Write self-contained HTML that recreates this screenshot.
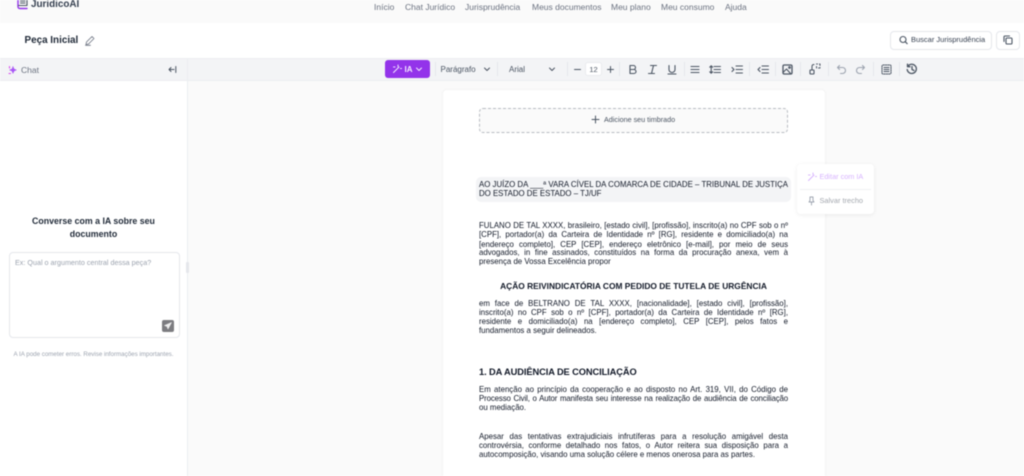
<!DOCTYPE html>
<html lang="pt-BR"><head><meta charset="utf-8"><title>JuridicoAI</title>
<style>
html,body{margin:0;padding:0;background:#fff}
#w{position:relative;width:1024px;height:476px;overflow:hidden;background:#fff;font-family:"Liberation Sans",sans-serif;filter:blur(.4px)}
#w div,#w span.a,#w svg{position:absolute}
.t{white-space:nowrap;line-height:12px}
.n{top:.5px;font-size:8.5px;color:#6b7280;line-height:12px;white-space:nowrap}
.l{left:479px;width:309px;font-size:7.85px;line-height:10px;height:10px;color:#111827;text-align:justify;text-align-last:justify;white-space:normal}
.e{text-align-last:left}
svg{fill:none;stroke:#4b5563;stroke-width:1.1;stroke-linecap:round;stroke-linejoin:round}
.s{top:62px;width:1px;height:14px;background:#e5e7eb}
.tb{font-size:8px;color:#4b5563;line-height:12px;top:63.5px;white-space:nowrap}
</style></head><body><div id="w">
<div style="left:0;top:0;width:1024px;height:23px;background:#fafafa"></div>
<svg style="left:16px;top:-3px" width="13" height="13" viewBox="0 0 13 13"><path d="M2 1v8.5c0 1.200 .8 2 2 2h7" stroke="#9333ea" stroke-width="1.400"/><path d="M2.500 1.500h8.500v7h-8.500M4.500 4h4.500M4.500 6h4.500"/></svg>
<div class="t" style="left:31px;top:-1px;font-size:9.900px;font-weight:700;color:#374151">JuridicoAI</div>
<div class="n" style="left:374px">Início</div>
<div class="n" style="left:405px">Chat Jurídico</div>
<div class="n" style="left:465px">Jurisprudência</div>
<div class="n" style="left:532px">Meus documentos</div>
<div class="n" style="left:611px">Meu plano</div>
<div class="n" style="left:661px">Meu consumo</div>
<div class="n" style="left:725px">Ajuda</div>

<div class="t" style="left:24.500px;top:35px;font-size:9.900px;font-weight:700;color:#1f2937">Peça Inicial</div>
<svg style="left:85px;top:35px" width="10" height="11" viewBox="0 0 10 11"><path d="M1 9.500l.5-2.500 5.500-5.500 2 2-5.500 5.500zM0.500 10.300h5" stroke="#6b7280" stroke-width=".8"/></svg>

<div style="left:890px;top:31px;width:100px;height:17px;border:1px solid #e5e7eb;border-radius:4px;background:#fff"></div>
<svg style="left:899px;top:35px" width="9" height="10" viewBox="0 0 9 10"><circle cx="4" cy="4.500" r="3"/><path d="M6.200 6.700l2 2"/></svg>
<div class="t" style="left:911px;top:34px;font-size:7.500px;color:#374151;font-weight:400">Buscar Jurisprudência</div>
<div style="left:996px;top:31px;width:22px;height:17px;border:1px solid #e5e7eb;border-radius:4px;background:#fff"></div>
<svg style="left:1003px;top:35px" width="10" height="10" viewBox="0 0 10 10"><rect x="3" y="3" width="6" height="6" rx="1"/><path d="M1 6.500v-4.500c0-.5.5-1 1-1h4.500"/></svg>

<div style="left:0;top:58px;width:1024px;height:23px;background:#f3f4f6;border-top:1px solid #eceef1;border-bottom:1px solid #eceef1;box-sizing:border-box"></div>
<div style="left:187px;top:58px;width:1px;height:418px;background:#eceef1"></div>
<div style="left:188px;top:81px;width:836px;height:395px;background:#fafafa"></div>

<svg style="left:8px;top:65px" width="10" height="10" viewBox="0 0 10 10"><path d="M5 1.500l1 2.500 2.500 1-2.500 1-1 2.500-1-2.500-2.500-1 2.500-1z" fill="#a855f7" stroke="#a855f7" stroke-width=".5"/><path d="M1.500 1.500v1.500M1 8.500h1.500" stroke="#d946ef"/></svg>
<div class="t" style="left:21px;top:63.500px;font-size:8.500px;color:#6b7280">Chat</div>
<svg style="left:168px;top:65px" width="9" height="9" viewBox="0 0 9 9"><path d="M7.800 1.500v6M6 4.500h-5M3 2.500l-2 2 2 2" stroke-width="1"/></svg>

<div style="left:385px;top:60px;width:45px;height:18px;border-radius:3px;background:#9333ea"></div>
<svg style="left:392px;top:64px" width="10" height="10" viewBox="0 0 10 10"><path d="M1.500 8.500l5.500-5.500M6 1v1.500M8.500 4.500h1M1.500 3h1.500" stroke="#f3e8ff" stroke-width="1"/></svg>
<div class="t" style="left:404.500px;top:63.500px;font-size:8px;font-weight:700;color:#f3e8ff">IA</div>
<svg style="left:415px;top:65px" width="8" height="8" viewBox="0 0 8 8"><path d="M1.500 3l2.500 2.500 2.500-2.500" stroke="#f3e8ff" stroke-width="1"/></svg>

<div class="s" style="left:435px"></div>
<div class="tb" style="left:440.500px">Parágrafo</div>
<svg style="left:483px;top:65px" width="8" height="8" viewBox="0 0 8 8"><path d="M1.500 3l2.500 2.500 2.500-2.500" stroke-width="1"/></svg>
<div class="s" style="left:497px"></div>
<div class="tb" style="left:509px">Arial</div>
<svg style="left:548px;top:65px" width="8" height="8" viewBox="0 0 8 8"><path d="M1.500 3l2.500 2.500 2.500-2.500" stroke-width="1"/></svg>
<div class="s" style="left:567px"></div>
<svg style="left:573px;top:65px" width="9" height="9" viewBox="0 0 9 9"><path d="M1.500 4.500h6" stroke-width="1"/></svg>
<div style="left:585px;top:62px;width:17px;height:14px;background:#fff;border:1px solid #e9ebee;border-radius:3px;box-sizing:border-box"></div>
<div class="tb" style="left:585px;width:17px;text-align:center;font-size:7.500px">12</div>
<svg style="left:605.500px;top:65px" width="9" height="9" viewBox="0 0 9 9"><path d="M1.500 4.500h6M4.500 1.500v6" stroke-width="1"/></svg>
<div class="s" style="left:619px"></div>
<svg style="left:628px;top:64px" width="10" height="11" viewBox="0 0 10 11"><path d="M2 1.500h3.500a2 2 0 0 1 0 4h-3.500zM2 5.500h4a2 2 0 0 1 0 4h-4z"/></svg>
<svg style="left:647px;top:64px" width="11" height="11" viewBox="0 0 11 11"><path d="M3.500 1.500h6M1.500 9.500h6M6.500 1.500l-2 8"/></svg>
<svg style="left:667px;top:64px" width="10" height="11" viewBox="0 0 10 11"><path d="M2 1.500v4a3 3 0 0 0 6 0v-4M1 10h8"/></svg>
<div class="s" style="left:684px"></div>
<svg style="left:690px;top:65px" width="10" height="9" viewBox="0 0 10 9"><path d="M1 1.500h8M1 4.500h8M1 7.500h8"/></svg>
<svg style="left:709px;top:65px" width="12" height="9" viewBox="0 0 12 9"><path d="M5 1.500h6.500M5 4.500h6.500M5 7.500h6.500" stroke-width="1"/><path d="M2.200 1v7M.8 2.200l1.400-1.400 1.400 1.400M.8 6.800l1.400 1.400 1.400-1.400"/></svg>
<svg style="left:731px;top:65px" width="12" height="9" viewBox="0 0 12 9"><path d="M5 1h6.500M5 4.500h6.500M5 8h6.500" stroke-width="1"/><path d="M1 2.500l2 2-2 2"/></svg>
<div class="s" style="left:749px"></div>
<svg style="left:757px;top:65px" width="12" height="9" viewBox="0 0 12 9"><path d="M5 1h6.500M5 4.500h6.500M5 8h6.500" stroke-width="1"/><path d="M3 2.500l-2 2 2 2"/></svg>
<div class="s" style="left:775px"></div>
<svg style="left:782px;top:64px" width="11" height="11" viewBox="0 0 11 11"><rect x="1" y="1" width="9" height="9" rx="1.200" stroke-width="1.300"/><circle cx="7.500" cy="3.500" r=".8"/><path d="M1 8.500l3.500-3.500 4 4.500"/></svg>
<div class="s" style="left:800px"></div>
<svg style="left:809px;top:63px" width="12" height="12" viewBox="0 0 12 12"><rect x="1" y="7" width="4" height="4" rx=".5"/><path d="M3 7v-3.500c0-1.200.8-2 2-2M7.500 1h1M10.500 1h.5v1.500M11 4.500v.5h-1.500M7.500 5v-1.500" stroke-width="1"/></svg>
<div class="s" style="left:828px"></div>
<svg style="left:836px;top:64px" width="11" height="11" viewBox="0 0 11 11"><path d="M3.500 1.500l-2 2 2 2M1.500 3.500h5a3 3 0 0 1 0 6h-2" stroke="#9ca3af"/></svg>
<svg style="left:855px;top:64px" width="11" height="11" viewBox="0 0 11 11"><path d="M7.500 1.500l2 2-2 2M9.500 3.500h-5a3 3 0 0 0 0 6h2" stroke="#9ca3af"/></svg>
<div class="s" style="left:873px"></div>
<svg style="left:881px;top:64px" width="11" height="11" viewBox="0 0 11 11"><rect x="1" y="1" width="9" height="9" rx="1" stroke-dasharray="1.400 1" stroke-width="1"/><path d="M3 3.500h5M3 5.500h5M3 7.500h5" stroke-width="1"/></svg>
<div class="s" style="left:899px"></div>
<svg style="left:906px;top:63px" width="12" height="12" viewBox="0 0 12 12"><path d="M1.800 3.500a4.600 4.600 0 1 1-.6 3M1.500 1.200v2.500h2.500M6 3.500v3l2 1" stroke-width="1.300"/></svg>

<div class="t" style="left:0;width:187px;top:214.500px;text-align:center;font-size:8.800px;font-weight:700;color:#1f2937">Converse com a IA sobre seu</div>
<div class="t" style="left:0;width:187px;top:228px;text-align:center;font-size:8.800px;font-weight:700;color:#1f2937">documento</div>
<div style="left:9px;top:252px;width:171px;height:86px;box-sizing:border-box;border:1px solid #e5e7eb;border-radius:4px;background:#fff"></div>
<div class="t" style="left:15px;top:257px;font-size:7.200px;color:#9ca3af">Ex: Qual o argumento central dessa peça?</div>
<div style="left:162px;top:320px;width:12px;height:12px;border-radius:2px;background:#7c7c80"></div>
<svg style="left:163px;top:321px" width="10" height="10" viewBox="0 0 10 10"><path d="M8.500 1.500l-7 3 2.500 1 1 2.500z" fill="#eee" stroke="#eee" stroke-width=".6"/></svg>
<div class="t" style="left:0;width:187px;top:348.500px;text-align:center;font-size:6.200px;color:#9ca3af">A IA pode cometer erros. Revise informações importantes.</div>
<div style="left:186px;top:262px;width:3px;height:11px;background:#e5e7eb;border-radius:1px"></div>

<div style="left:443px;top:90px;width:382px;height:390px;background:#fff;border-radius:4px;box-shadow:0 0 3px rgba(0,0,0,.06)"></div>
<div style="left:479px;top:108px;width:309px;height:25px;box-sizing:border-box;border:1px dashed #b8bcc2;border-radius:4px;background:#fafafa"></div>
<svg style="left:591px;top:115px" width="9" height="9" viewBox="0 0 9 9"><path d="M4.500 1v7M1 4.500h7" stroke-width="1"/></svg>
<div class="t" style="left:604px;top:114px;font-size:7.200px;color:#4b5563">Adicione seu timbrado</div>

<div style="left:476px;top:177px;width:315px;height:25px;background:#f3f4f6;border-radius:5px"></div>
<div class="l" style="top:179.500px;width:309px">AO JUÍZO DA ___ª VARA CÍVEL DA COMARCA DE CIDADE – TRIBUNAL DE JUSTIÇA</div>
<div class="l e" style="top:188.500px">DO ESTADO DE ESTADO – TJ/UF</div>

<div style="left:797px;top:164px;width:77px;height:50px;background:#fff;border-radius:4px;box-shadow:0 1px 5px rgba(0,0,0,.07)"></div>
<div style="left:800px;top:189px;width:71px;height:1px;background:#f0f1f3"></div>
<svg style="left:807px;top:172px" width="10" height="10" viewBox="0 0 10 10"><path d="M1.500 8.500l5.500-5.500M6 1v1.500M8.500 4.500h1M1.500 3h1.500" stroke="#d8b4fe" stroke-width="1"/></svg>
<div class="t" style="left:819.500px;top:171px;font-size:7.300px;color:#d8b4fe">Editar com IA</div>
<svg style="left:807px;top:196px" width="9" height="10" viewBox="0 0 9 10"><path d="M3 1h3v3.500l1 1.500h-5l1-1.500zM4.500 6v3" stroke="#9ca3af" stroke-width=".9"/></svg>
<div class="t" style="left:819.500px;top:195px;font-size:7.400px;color:#a3a7ae">Salvar trecho</div>

<div class="l" style="top:221px">FULANO DE TAL XXXX, brasileiro, [estado civil], [profissão], inscrito(a) no CPF sob o nº</div>
<div class="l" style="top:230px">[CPF], portador(a) da Carteira de Identidade nº [RG], residente e domiciliado(a) na</div>
<div class="l" style="top:239.500px">[endereço completo], CEP [CEP], endereço eletrônico [e-mail], por meio de seus</div>
<div class="l" style="top:248px">advogados, in fine assinados, constituídos na forma da procuração anexa, vem à</div>
<div class="l e" style="top:256.500px">presença de Vossa Excelência propor</div>

<div class="l e" style="top:281px;text-align:center;text-align-last:center;font-weight:700;font-size:8.400px;color:#111827">AÇÃO REIVINDICATÓRIA COM PEDIDO DE TUTELA DE URGÊNCIA</div>

<div class="l" style="top:298.500px">em face de BELTRANO DE TAL XXXX, [nacionalidade], [estado civil], [profissão],</div>
<div class="l" style="top:307.500px">inscrito(a) no CPF sob o nº [CPF], portador(a) da Carteira de Identidade nº [RG],</div>
<div class="l" style="top:316.500px">residente e domiciliado(a) na [endereço completo], CEP [CEP], pelos fatos e</div>
<div class="l e" style="top:325.500px">fundamentos a seguir delineados.</div>

<div class="l e" style="top:366.500px;font-weight:700;font-size:9.300px;color:#111827;letter-spacing:-.1px">1. DA AUDIÊNCIA DE CONCILIAÇÃO</div>

<div class="l" style="top:384.500px">Em atenção ao princípio da cooperação e ao disposto no Art. 319, VII, do Código de</div>
<div class="l" style="top:393.500px;letter-spacing:-.12px">Processo Civil, o Autor manifesta seu interesse na realização de audiência de conciliação</div>
<div class="l e" style="top:402.500px">ou mediação.</div>

<div class="l" style="top:431.500px">Apesar das tentativas extrajudiciais infrutíferas para a resolução amigável desta</div>
<div class="l" style="top:440.500px">controvérsia, conforme detalhado nos fatos, o Autor reitera sua disposição para a</div>
<div class="l e" style="top:450px">autocomposição, visando uma solução célere e menos onerosa para as partes.</div>
</div></body></html>
